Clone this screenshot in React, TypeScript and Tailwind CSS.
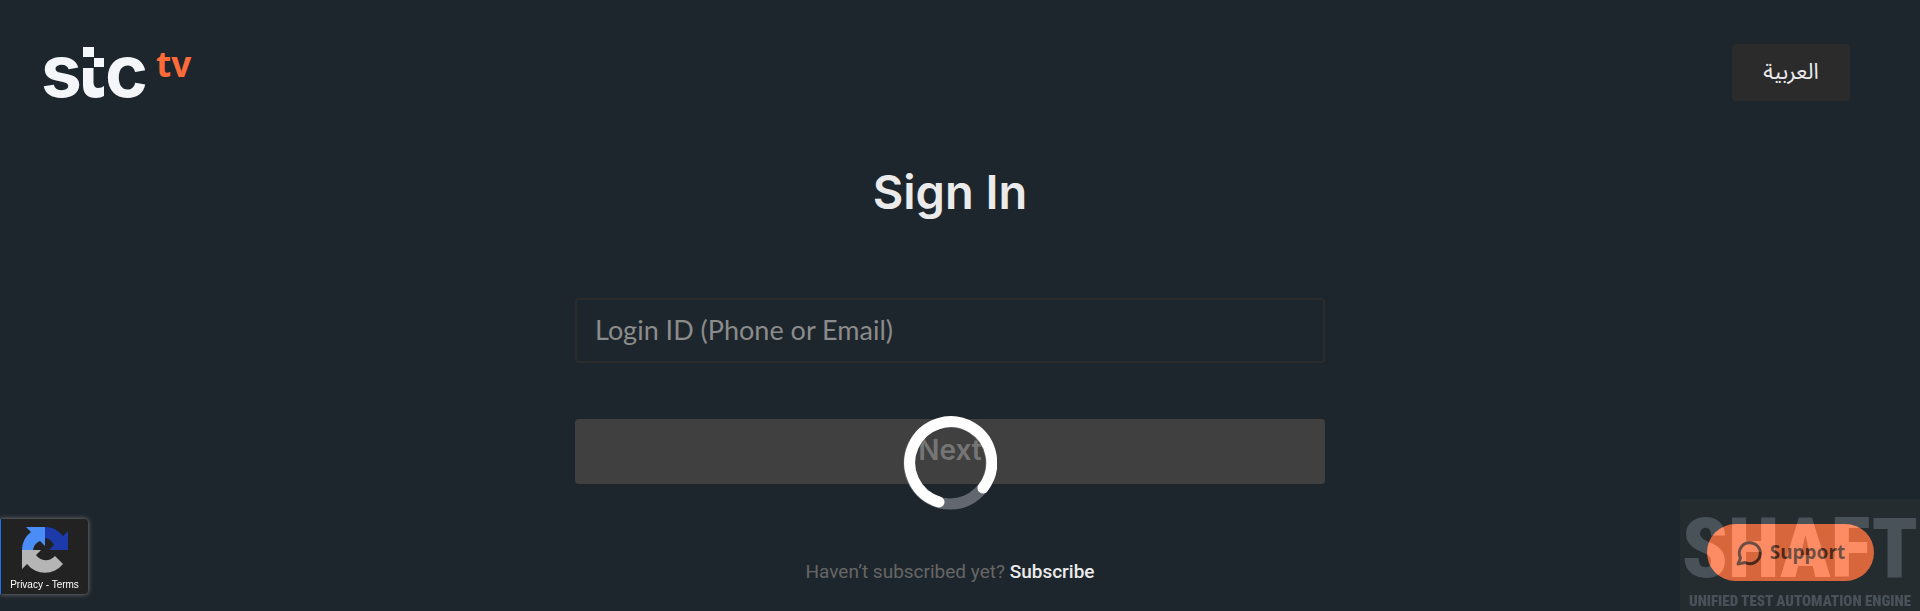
import React from "react";

function Logo() {
  return (
    <svg viewBox="-8 -30 160 112" className="h-28 w-40" role="img" aria-label="stc tv">
      <g fill="#f4f6f9">
        <text x="-3" y="53" fontFamily="Inter, sans-serif" fontWeight="700" fontSize="73">s</text>
        <text x="61" y="53" fontFamily="Inter, sans-serif" fontWeight="700" fontSize="73">c</text>
        <rect x="39" y="3" width="11" height="10" />
        <rect x="50" y="14" width="10" height="9" />
        <path d="M39 24H49.500V39Q50 44 54 44Q58 44 60 42V52Q57 54 52 54Q39 54 39 41Z" />
      </g>
      <text x="112" y="33" fill="#ff6a39" fontFamily="Noto Sans, sans-serif" fontWeight="700" fontSize="35">tv</text>
    </svg>
  );
}

function Spinner() {
  return (
    <svg viewBox="0 0 94 94" className="h-[94px] w-[94px]" role="status" aria-label="Loading" fill="none">
      <circle cx="47" cy="47" r="41" stroke="#63676f" strokeWidth="11" />
      <path d="M36 86A41 41 0 1 1 80 72" stroke="#fff" strokeWidth="11" strokeLinecap="round" />
    </svg>
  );
}

function RecaptchaBadge() {
  return (
    <aside className="fixed bottom-[17px] left-0 flex h-[75px] w-[88px] flex-col items-center rounded-r-sm border-l border-[#1a73e8] bg-[#222] pt-2 shadow-[0_0_5px_#808080]">
      <svg viewBox="0 0 46 46" className="h-[46px] w-[46px]" aria-hidden="true">
        <path fill="#1c3aa9" d="M46 23V4l-5 5A23 23 0 0 0 23 0v11a12 12 0 0 1 9 7l-5 5Z" />
        <path fill="#4a8df6" d="M23 0H4l5 5A23 23 0 0 0 0 23h11a12 12 0 0 1 7-9l5 5Z" />
        <path fill="#b5b5b5" d="M0 23v19l5-5a23 23 0 0 0 36 0l-8-8a12 12 0 0 1-19-1l5-5Z" />
      </svg>
      <p className="mt-1 whitespace-nowrap font-['Liberation_Sans',sans-serif] text-[10px] leading-4 text-white">
        <a href="#privacy">Privacy</a> - <a href="#terms">Terms</a>
      </p>
    </aside>
  );
}

function SupportButton() {
  return (
    <button
      type="button"
      className="fixed right-[46px] bottom-[30px] flex h-[57px] w-[167px] items-center justify-center gap-2 rounded-full bg-[#ff6f3c] font-['Noto_Sans',sans-serif] text-[19px] font-bold text-black/70"
    >
      <svg viewBox="0 0 26 26" className="h-[26px] w-[26px]" fill="none" stroke="currentColor" strokeWidth="3" strokeLinejoin="round" aria-hidden="true">
        <path d="M4.500 18A10.500 10.500 0 1 1 9 22.500L2 24Z" />
      </svg>
      Support
    </button>
  );
}

function Watermark() {
  return (
    <>
      <div className="pointer-events-none fixed right-0 bottom-0 h-28 w-60 bg-[#3e443d]/20" />
      <div className="pointer-events-none fixed right-0 bottom-0 flex h-28 w-60 flex-col items-center justify-end whitespace-nowrap text-[#252628] mix-blend-plus-lighter">
        <span className="font-['Roboto_Condensed','Open_Sans_Condensed','Roboto',sans-serif] text-[84px] leading-[84px] font-black">
          SHAFT
        </span>
        <span className="font-['Roboto_Condensed','Open_Sans_Condensed','Roboto',sans-serif] text-[15px] leading-5 font-black">
          UNIFIED TEST AUTOMATION ENGINE
        </span>
      </div>
    </>
  );
}

export default function App() {
  return (
    <div className="min-h-screen bg-[#1e262d] font-[Inter,sans-serif] text-[#ebebeb]">
      <header className="flex items-start justify-between pt-3.5 pr-[70px] pl-9">
        <a href="#home"><Logo /></a>
        <button type="button" lang="ar" dir="rtl" className="mt-[30px] h-[57px] w-[118px] rounded-sm bg-[#2b2b2b] font-['Noto_Sans_Arabic','DejaVu_Sans',sans-serif] text-[22px]">
          العربية
        </button>
      </header>

      <main className="pr-5">
        <div className="mx-auto w-full max-w-[750px]">
          <h1 className="mt-[38px] text-center text-[47px] leading-[56px] font-semibold">Sign In</h1>
          <form onSubmit={(event) => event.preventDefault()}>
            <input
              type="text"
              aria-label="Login ID (Phone or Email)"
              placeholder="Login ID (Phone or Email)"
              className="mt-[78px] block h-[65px] w-full rounded-sm border-2 border-[#2b2b2b] bg-transparent px-[18px] pb-0.5 font-[Lato,sans-serif] text-[27px] placeholder:text-[#8b8b8b]"
            />
            <div className="relative mt-14">
              <button type="submit" disabled className="block h-[65px] w-full rounded-sm bg-[#404040] pb-1 text-[28px] font-semibold text-[#757575]">
                Next
              </button>
              <div className="absolute inset-x-0 -top-[3px] flex justify-center">
                <Spinner />
              </div>
            </div>
          </form>
          <p className="mt-[76px] text-center font-[Roboto,sans-serif] text-[19px] leading-6 text-[#666]">
            Haven’t subscribed yet? <a href="#subscribe" className="font-medium text-[#ebebeb]">Subscribe</a>
          </p>
        </div>
      </main>

      <SupportButton />
      <Watermark />
      <RecaptchaBadge />
    </div>
  );
}
